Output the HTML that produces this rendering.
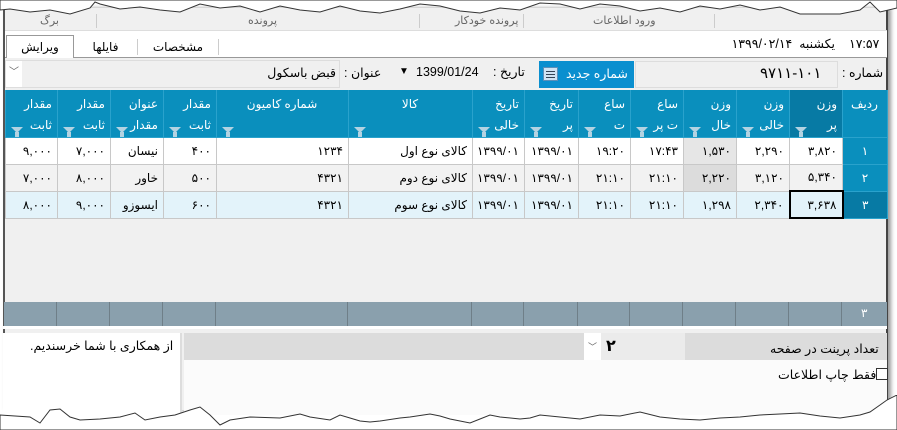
<!DOCTYPE html>
<html><head><meta charset="utf-8">
<style>
*{box-sizing:border-box;margin:0;padding:0}
body{width:897px;height:430px;background:#fff;position:relative;overflow:hidden;font-family:"Liberation Sans","DejaVu Sans",sans-serif;font-size:12px;color:#000}
.a{position:absolute}
.win{left:3px;top:8px;width:885px;height:402px;background:#f0f0f0;border-left:2px solid #555;border-right:2px solid #444;box-shadow:3px 0 4px rgba(0,0,0,.4)}
.rt{direction:rtl;white-space:nowrap}
table{border-collapse:collapse;table-layout:fixed;direction:ltr;position:absolute;left:5px;top:90px;width:882px}
td{border:1px solid #c8c8c8;height:27px;padding:0 5px;text-align:right;direction:rtl;white-space:nowrap;font-size:12px;overflow:hidden}
th{background:#0a8fbd;color:#fff;font-weight:normal;height:47px;border:1px solid #2aa2cc;border-top:0;text-align:right;vertical-align:top;padding:4px 5px 0 4px;direction:rtl;line-height:21px;position:relative;font-size:12px;overflow:hidden}
th.d{background:#077aa4}
th i{position:absolute;left:5px;bottom:4px;width:0;height:0;border-left:6px solid transparent;border-right:6px solid transparent;border-top:6px solid #b3d3e2}
th i:after{content:"";position:absolute;left:-2px;top:-1px;width:4px;height:5px;background:#b3d3e2}
tr.r2 td{background:#f2f2f2}
tr.r3 td{background:#e3f3fa}
tr.r1 td{background:#fff}
td.n{background:#0a8fbd!important;color:#fff;text-align:center;border-color:#2aa2cc}
tr.r3 td.n{background:#077aa4!important}
.m{color:#666;font-size:11px}
</style></head><body>
<div class="a win"></div>
<svg class="a" style="left:0;top:0" width="897" height="20"><path d="M0,0 H897 V8 L880,12 L870,2 L860,10 L840,14 L800,14 L780,7 L760,10 L740,5 L720,9 L700,6 L680,12 L660,8 L640,11 L620,6 L600,4 L580,9 L560,4 L540,3 L520,10 L500,8 L480,13 L460,11 L440,6 L420,4 L400,9 L380,13 L360,11 L340,6 L320,12 L300,10 L280,6 L260,12 L240,6 L220,8 L200,4 L180,12 L160,10 L140,7 L120,9 L100,4 L95,2 L90,8 L70,14 L50,10 L30,12 L10,9 L0,10 Z" fill="#fff" stroke="#333" stroke-width="1"/></svg>
<div class="a rt m" style="left:40px;top:14px">برگ</div>
<div class="a rt m" style="left:248px;top:14px">پرونده</div>
<div class="a rt m" style="left:455px;top:14px">پرونده خودکار</div>
<div class="a rt m" style="left:593px;top:14px">ورود اطلاعات</div>
<div class="a" style="left:96px;top:14px;width:1px;height:14px;background:#ccc"></div>
<div class="a" style="left:419px;top:14px;width:1px;height:14px;background:#ccc"></div>
<div class="a" style="left:523px;top:14px;width:1px;height:14px;background:#ccc"></div>
<div class="a" style="left:714px;top:14px;width:1px;height:14px;background:#ccc"></div>
<div class="a" style="left:5px;top:30px;width:882px;height:1px;background:#ddd"></div>
<div class="a" style="left:5px;top:31px;width:882px;height:27px;background:#fff"></div>
<div class="a" style="left:5px;top:57px;width:882px;height:1px;background:#999"></div>
<div class="a rt" style="left:6px;top:35px;width:68px;height:23px;background:#fff;border:1px solid #999;border-bottom:0;text-align:center;line-height:22px">ویرایش</div>
<div class="a rt" style="left:74px;top:38px;width:63px;text-align:center;line-height:18px">فایلها</div>
<div class="a" style="left:137px;top:39px;width:1px;height:16px;background:#ccc"></div>
<div class="a rt" style="left:138px;top:38px;width:80px;text-align:center;line-height:18px">مشخصات</div>
<div class="a" style="left:218px;top:39px;width:1px;height:16px;background:#ccc"></div>
<div class="a rt" style="left:720px;top:36px;width:115px;text-align:right;font-size:12.5px">یکشنبه &nbsp;۱۳۹۹/۰۲/۱۴</div>
<div class="a" style="left:849px;top:36px;font-size:12.5px">۱۷:۵۷</div>
<div class="a" style="left:5px;top:60px;width:335px;height:28px;background:#f0f0f0;border:1px solid #ddd"></div>
<div class="a" style="left:6px;top:61px;width:16px;height:26px;background:#fff;color:#666;text-align:center;line-height:24px;font-size:10px">﹀</div>
<div class="a rt" style="left:200px;top:65px;width:136px;text-align:right;font-size:12.5px">قبض باسکول</div>
<div class="a rt" style="left:344px;top:65px;font-size:12.5px">عنوان :</div>
<div class="a" style="left:399px;top:66px;font-size:10px">&#9660;</div>
<div class="a" style="left:416px;top:65px;font-size:12.5px">1399/01/24</div>
<div class="a rt" style="left:493px;top:64px;font-size:12.5px">تاریخ :</div>
<div class="a" style="left:539px;top:61px;width:95px;height:27px;background:#0a8fcf"></div>
<div class="a" style="left:543px;top:67px;width:15px;height:14px;background:#cfe3f3;border:1px solid #5b8fb9"><div style="margin:3px 2px;height:1px;background:#345;box-shadow:0 3px #345,0 6px #345"></div></div>
<div class="a rt" style="left:566px;top:66px;color:#fff;font-size:12.5px">شماره جدید</div>
<div class="a" style="left:635px;top:61px;width:203px;height:27px;background:#f0f0f0;border:1px solid #ddd"></div>
<div class="a" style="left:760px;top:64px;font-size:15px">۹۷۱۱-۱۰۱</div>
<div class="a rt" style="left:842px;top:65px;font-size:12.5px">شماره :</div>
<table>
<colgroup><col style="width:52px"><col style="width:53px"><col style="width:53px"><col style="width:53px"><col style="width:132px"><col style="width:124px"><col style="width:52px"><col style="width:54px"><col style="width:52px"><col style="width:53px"><col style="width:53px"><col style="width:53px"><col style="width:53px"><col style="width:45px"></colgroup>
<tr><th>مقدار<br>ثابت<i></i></th><th>مقدار<br>ثابت<i></i></th><th>عنوان<br>مقدار<i></i></th><th>مقدار<br>ثابت<i></i></th><th style="text-align:center">شماره کامیون<i></i></th><th style="text-align:center">کالا<i></i></th><th>تاریخ<br>خالی<i></i></th><th>تاریخ<br>پر<i></i></th><th>ساع<br>ت<i></i></th><th>ساع<br>ت پر<i></i></th><th>وزن<br>خال<i></i></th><th>وزن<br>خالی<i></i></th><th class="d">وزن<br>پر<i></i></th><th style="text-align:center">ردیف</th></tr>
<tr class="r1"><td>۹,۰۰۰</td><td>۷,۰۰۰</td><td>نیسان</td><td>۴۰۰</td><td>۱۲۳۴</td><td>کالای نوع اول</td><td>۱۳۹۹/۰۱</td><td>۱۳۹۹/۰۱</td><td>۱۹:۲۰</td><td>۱۷:۴۳</td><td style="background:#e6e6e6">۱,۵۳۰</td><td>۲,۲۹۰</td><td>۳,۸۲۰</td><td class="n">۱</td></tr>
<tr class="r2"><td>۷,۰۰۰</td><td>۸,۰۰۰</td><td>خاور</td><td>۵۰۰</td><td>۴۳۲۱</td><td>کالای نوع دوم</td><td>۱۳۹۹/۰۱</td><td>۱۳۹۹/۰۱</td><td>۲۱:۱۰</td><td>۲۱:۱۰</td><td style="background:#dcdcdc">۲,۲۲۰</td><td>۳,۱۲۰</td><td>۵,۳۴۰</td><td class="n">۲</td></tr>
<tr class="r3"><td>۸,۰۰۰</td><td>۹,۰۰۰</td><td>ایسوزو</td><td>۶۰۰</td><td>۴۳۲۱</td><td>کالای نوع سوم</td><td>۱۳۹۹/۰۱</td><td>۱۳۹۹/۰۱</td><td>۲۱:۱۰</td><td>۲۱:۱۰</td><td>۱,۲۹۸</td><td>۲,۳۴۰</td><td style="border:2px solid #000">۳,۶۳۸</td><td class="n">۳</td></tr>
</table>
<div class="a" style="left:4px;top:302px;width:883px;height:24px;background:#8aa0ad"></div>
<svg class="a" style="left:0;top:302px" width="897" height="24"><g stroke="#6f7f88" stroke-width="1"><line x1="56.5" y1="0" x2="56.5" y2="24"/><line x1="109.5" y1="0" x2="109.5" y2="24"/><line x1="162.5" y1="0" x2="162.5" y2="24"/><line x1="215.5" y1="0" x2="215.5" y2="24"/><line x1="347.5" y1="0" x2="347.5" y2="24"/><line x1="471.5" y1="0" x2="471.5" y2="24"/><line x1="523.5" y1="0" x2="523.5" y2="24"/><line x1="577.5" y1="0" x2="577.5" y2="24"/><line x1="629.5" y1="0" x2="629.5" y2="24"/><line x1="682.5" y1="0" x2="682.5" y2="24"/><line x1="735.5" y1="0" x2="735.5" y2="24"/><line x1="788.5" y1="0" x2="788.5" y2="24"/><line x1="841.5" y1="0" x2="841.5" y2="24"/></g></svg>
<div class="a" style="left:861px;top:306px;color:#fff;font-size:12px">۳</div>
<div class="a" style="left:3px;top:326px;width:884px;height:3px;background:#fff"></div>
<div class="a" style="left:184px;top:333px;width:703px;height:27px;background:#dcdcdc"></div>
<div class="a" style="left:184px;top:360px;width:703px;height:55px;background:#fbfbfb"></div>
<div class="a" style="left:584px;top:333px;width:17px;height:27px;background:#fff;color:#666;font-size:9px;text-align:center;line-height:28px">﹀</div>
<div class="a" style="left:601px;top:333px;width:84px;height:27px;background:#ebebeb"></div>
<div class="a" style="left:606px;top:336px;font-size:16px;font-weight:bold">۲</div>
<div class="a rt" style="left:770px;top:341px;font-size:12.5px">تعداد پرینت در صفحه</div>
<div class="a" style="left:876px;top:368px;width:12px;height:12px;border:1px solid #333;background:#fff"></div>
<div class="a rt" style="left:778px;top:367px;font-size:12.5px">فقط چاپ اطلاعات</div>
<div class="a" style="left:3px;top:333px;width:179px;height:82px;background:#fff;border-right:2px solid #ddd"></div>
<div class="a rt" style="left:30px;top:338px;font-size:12.5px">از همکاری با شما خرسندیم.</div>
<svg class="a" style="left:0;top:395px" width="897" height="35"><path d="M0,20 L15,21 L30,22 L40,28 L50,15 L60,14 L70,22 L80,25 L100,24 L120,22 L135,18 L145,25 L160,22 L175,20 L190,15 L200,12 L210,20 L220,30 L230,25 L250,22 L280,23 L290,21 L300,19 L310,22 L330,25 L340,20 L350,23 L360,26 L370,27 L380,26 L400,23 L410,22 L430,19 L440,21 L450,24 L470,28 L480,24 L490,20 L500,22 L520,24 L530,23 L540,20 L560,22 L580,24 L600,20 L620,21 L640,17 L660,22 L680,24 L700,25 L720,23 L740,22 L760,20 L780,19 L800,18 L820,21 L840,23 L860,20 L870,17 L880,10 L887,5 L897,0 V35 H0 Z" fill="#fff" stroke="#333" stroke-width="1"/></svg>
</body></html>
